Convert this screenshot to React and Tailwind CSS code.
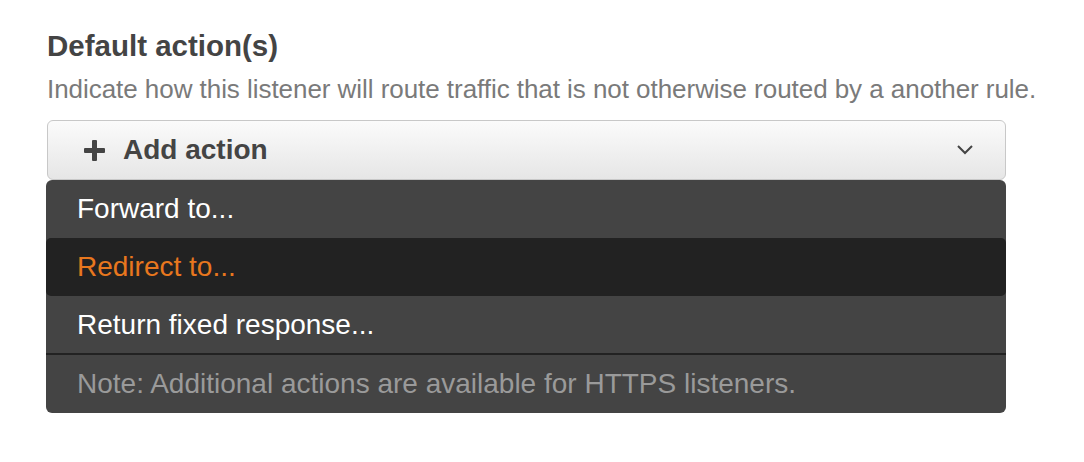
export default function App() {
  const font = { fontFamily: '"Helvetica Neue", "Liberation Sans", Arial, sans-serif' };
  return (
    <div className="w-[1084px] h-[462px] bg-white" style={font}>
      <div className="pl-[47px] pt-[31px] w-[1006px]">
        <div className="text-[29.5px] leading-[30px] font-bold text-[#444]">Default action(s)</div>
        <div className="mt-[13px] text-[26px] leading-[30px] text-[#7a7a7a] font-light whitespace-nowrap tracking-[-0.05px]">
          Indicate how this listener will route traffic that is not otherwise routed by a another rule.
        </div>
        <div className="mt-[16px] h-[60px] rounded-[6px] border border-[#c8c8c8] bg-gradient-to-b from-[#fbfbfb] to-[#e6e6e6] flex items-center pl-[35px] pr-[30px]">
          <svg width="23" height="23" viewBox="0 0 23 23" className="mr-[17px]">
            <rect x="9" y="1" width="5" height="21" rx="1" fill="#444" />
            <rect x="1" y="9" width="21" height="5" rx="1" fill="#444" />
          </svg>
          <span className="text-[28px] font-bold text-[#444]">Add action</span>
          <svg className="ml-auto" width="20" height="12" viewBox="0 0 20 12">
            <path d="M3 2 L10 9 L17 2" stroke="#444" strokeWidth="2" fill="none" />
          </svg>
        </div>
        <div className="-ml-px w-[960px] rounded-[6px] bg-[#444] overflow-hidden">
          <div className="h-[58px] flex items-center pl-[31px] text-[28px] text-white">Forward to...</div>
          <div className="h-[58px] flex items-center pl-[31px] text-[28px] text-[#e8771e] bg-[#222] rounded-[5px]">Redirect to...</div>
          <div className="h-[59px] flex items-center pl-[31px] text-[28px] text-white border-b-2 border-[#222]">Return fixed response...</div>
          <div className="h-[58px] flex items-center pl-[31px] text-[28px] text-[#9a9a9a]">Note: Additional actions are available for HTTPS listeners.</div>
        </div>
      </div>
    </div>
  );
}
